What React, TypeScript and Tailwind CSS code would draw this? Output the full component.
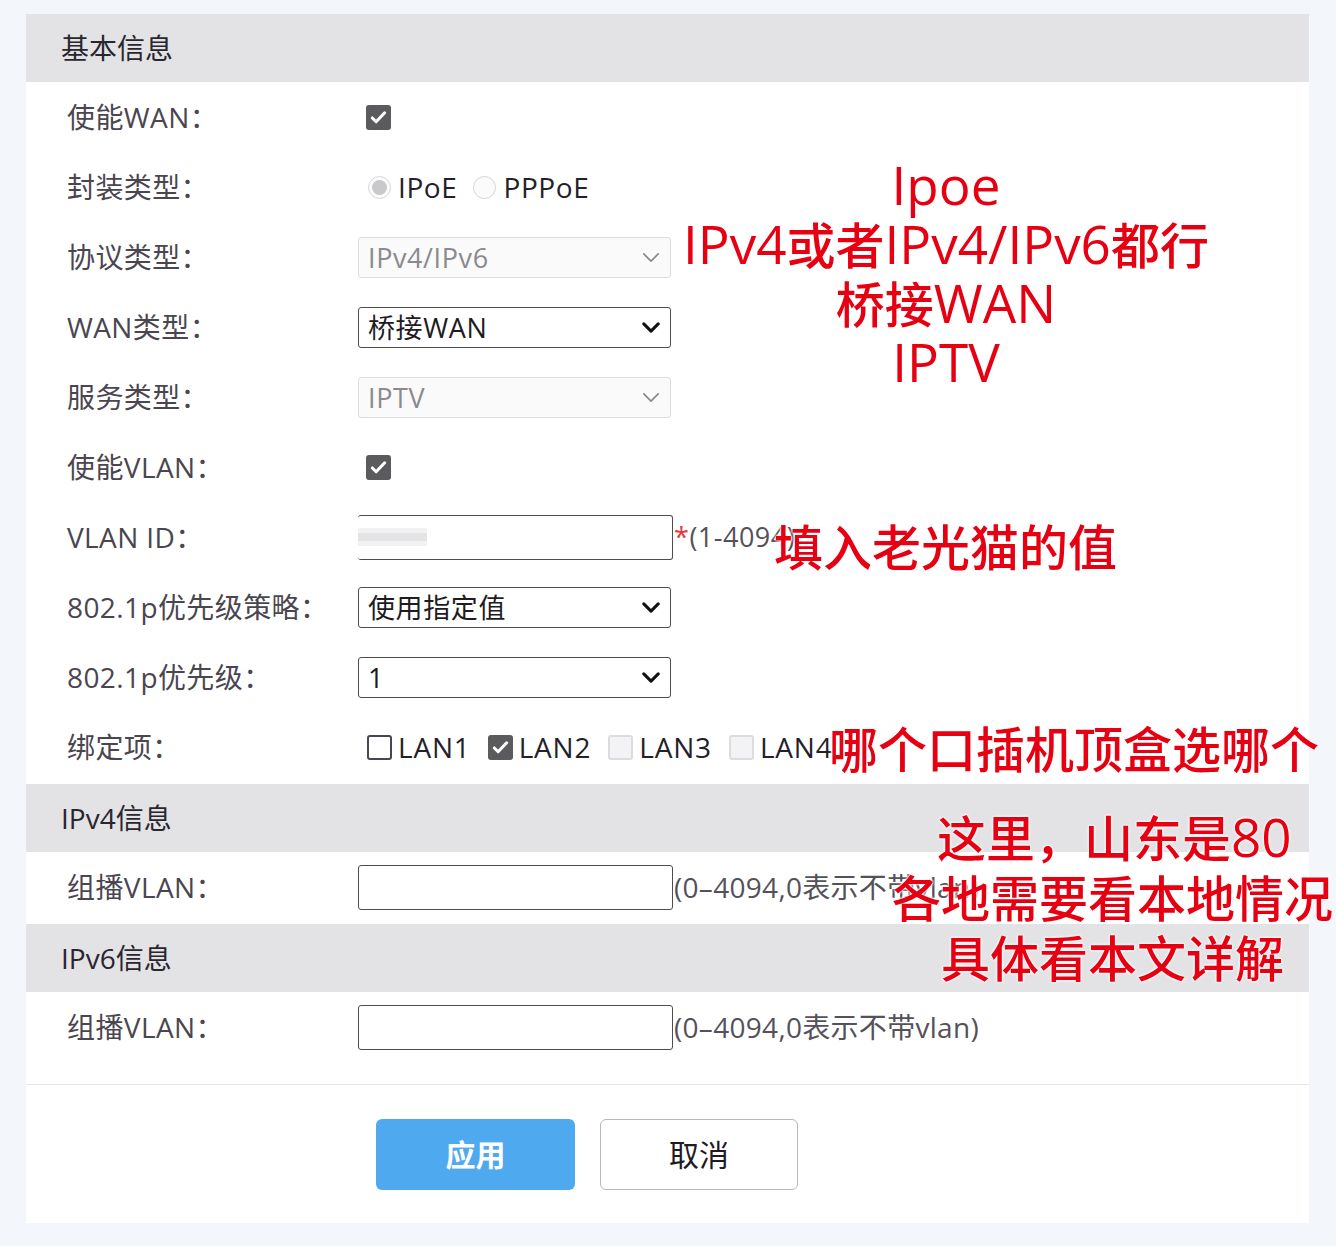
import React from 'react';

const font = { fontFamily: '"Open Sans", "Noto Sans CJK SC", sans-serif' };

const Check = ({ checked, disabled }: { checked?: boolean; disabled?: boolean }) => {
  if (checked) {
    return (
      <span className="w-[25px] h-[25px] rounded-[3px] bg-[#5b5b5d] flex items-center justify-center shrink-0">
        <svg viewBox="0 0 20 20" className="w-[19px] h-[19px]">
          <path d="M3.5 10.5l4 4 9-9.5" fill="none" stroke="#fff" strokeWidth="3.2" strokeLinecap="round" strokeLinejoin="round" />
        </svg>
      </span>
    );
  }
  return (
    <span
      className={
        'w-[25px] h-[25px] rounded-[3px] border-2 shrink-0 ' +
        (disabled ? 'border-[#dcdcdf] bg-[#f3f3f5]' : 'border-[#4a4550] bg-white')
      }
    />
  );
};

const Chevron = ({ bold }: { bold?: boolean }) => (
  <svg viewBox="0 0 20 12" className="w-[18px] h-[11px]">
    <path
      d="M2 2l8 8 8-8"
      fill="none"
      stroke={bold ? '#111' : '#888'}
      strokeWidth={bold ? 3.4 : 1.8}
      strokeLinecap="round"
      strokeLinejoin="round"
    />
  </svg>
);

const Select = ({ value, disabled }: { value: string; disabled?: boolean }) => (
  <div
    className={
      'w-[313px] h-[41px] rounded-[3px] border flex items-center justify-between pl-[9px] pr-[10px] ' +
      (disabled ? 'border-[#dedee0] bg-[#fafafb] text-[#8a8a8e]' : 'border-[#4e4b52] bg-white text-[#1e1b22]')
    }
  >
    <span className="text-[27px] leading-none tracking-[0.6px]">{value}</span>
    <Chevron bold={!disabled} />
  </div>
);

const Row = ({ label, children }: { label: string; children: React.ReactNode }) => (
  <div className="h-[70px] flex items-center pl-[41px]">
    <div className="w-[291px] text-[28px] text-[#4a4650] tracking-[0.4px]">{label}</div>
    <div className="flex items-center">{children}</div>
  </div>
);

const Header = ({ title }: { title: string }) => (
  <div className="h-[68px] bg-[#e3e3e5] flex items-center pl-[35px] text-[28px] text-[#2a2630]">{title}</div>
);

const Radio = ({ on, label }: { on?: boolean; label: string }) => (
  <div className="flex items-center gap-[7px]">
    <span className="w-[23px] h-[23px] rounded-full border border-[#d6d6d9] bg-[#fbfbfc] flex items-center justify-center">
      {on && <span className="w-[15px] h-[15px] rounded-full bg-[#c9c9cc]" />}
    </span>
    <span className="text-[28px] text-[#241f2a] tracking-[0.6px]">{label}</span>
  </div>
);

const red =
  'absolute text-[#e60012] font-medium leading-[50px] whitespace-nowrap [text-shadow:0_0_3px_#fff,0_0_3px_#fff,0_0_2px_#fff]';

const L = ({ children }: { children: React.ReactNode }) => (
  <span className="text-[53px] leading-[50px]">{children}</span>
);

export default function App() {
  return (
    <div className="relative w-[1336px] h-[1246px] bg-[#f3f6fb] pt-[14px] pl-[26px]" style={font}>
      <div className="w-[1283px] bg-white pb-[33px]">
        <Header title="基本信息" />
        <Row label="使能WAN：">
          <span className="ml-[8px]"><Check checked /></span>
        </Row>
        <Row label="封装类型：">
          <div className="flex items-center gap-[16px] ml-[10px]">
            <Radio on label="IPoE" />
            <Radio label="PPPoE" />
          </div>
        </Row>
        <Row label="协议类型：">
          <Select value="IPv4/IPv6" disabled />
        </Row>
        <Row label="WAN类型：">
          <Select value="桥接WAN" />
        </Row>
        <Row label="服务类型：">
          <Select value="IPTV" disabled />
        </Row>
        <Row label="使能VLAN：">
          <span className="ml-[8px]"><Check checked /></span>
        </Row>
        <Row label="VLAN ID：">
          <div className="w-[315px] h-[45px] border border-[#4e4b52] border-l-0 rounded-[3px] bg-white flex items-center">
            <span className="w-[69px] h-[18px] bg-[#e4e4e6] border-y-[5px] border-[#f2f2f3]" />
          </div>
          <span className="text-[27px] text-[#55515a] ml-[1px] tracking-[0.5px]">
            <span className="text-[#e03a3a]">*</span>(1-4094)
          </span>
        </Row>
        <Row label="802.1p优先级策略：">
          <Select value="使用指定值" />
        </Row>
        <Row label="802.1p优先级：">
          <Select value="1" />
        </Row>
        <Row label="绑定项：">
          <div className="flex items-center gap-[17px] ml-[9px] text-[28px] text-[#241f2a] tracking-[0.8px]">
            <div className="flex items-center gap-[6px]"><Check /><span>LAN1</span></div>
            <div className="flex items-center gap-[6px]"><Check checked /><span>LAN2</span></div>
            <div className="flex items-center gap-[6px]"><Check disabled /><span>LAN3</span></div>
            <div className="flex items-center gap-[6px]"><Check disabled /><span>LAN4</span></div>
          </div>
        </Row>
        <div className="h-[2px]" />
        <Header title="IPv4信息" />
        <Row label="组播VLAN：">
          <div className="w-[315px] h-[45px] border border-[#4e4b52] rounded-[3px] bg-white" />
          <span className="text-[28px] text-[#55515a] ml-[1px] tracking-[0.3px]">(0–4094,0表示不带vlan)</span>
        </Row>
        <div className="h-[2px]" />
        <Header title="IPv6信息" />
        <Row label="组播VLAN：">
          <div className="w-[315px] h-[45px] border border-[#4e4b52] rounded-[3px] bg-white" />
          <span className="text-[28px] text-[#55515a] ml-[1px] tracking-[0.3px]">(0–4094,0表示不带vlan)</span>
        </Row>
        <div className="h-[22px]" />
        <div className="border-t border-[#e6e6e8] pt-[34px] flex gap-[25px] pl-[350px]">
          <button className="w-[199px] h-[71px] rounded-[6px] bg-[#4fa9ef] text-white text-[30px] font-bold">应用</button>
          <button className="w-[198px] h-[71px] rounded-[6px] border border-[#b8b8bc] bg-white text-[#1e1b22] text-[30px]">取消</button>
        </div>
      </div>

      <div className="absolute left-[640px] top-[160px] w-[612px] flex flex-col items-center gap-[8px] text-[49px] text-[#e60012] font-medium leading-[50px] whitespace-nowrap [text-shadow:0_0_3px_#fff,0_0_3px_#fff,0_0_2px_#fff]">
        <div><L>Ipoe</L></div>
        <div><L>IPv4</L>或者<L>IPv4/IPv6</L>都行</div>
        <div>桥接<L>WAN</L></div>
        <div><L>IPTV</L></div>
      </div>
      <span className={red + ' left-[774px] top-[522px] text-[49px]'}>填入老光猫的值</span>
      <span className={red + ' left-[829px] top-[724px] text-[49px]'}>哪个口插机顶盒选哪个</span>
      <span className={red + ' left-[937px] top-[812px] text-[49px]'}>
        这里，山东是<L>80</L>
      </span>
      <span className={red + ' left-[892px] top-[873px] text-[49px]'}>各地需要看本地情况</span>
      <span className={red + ' left-[941px] top-[933px] text-[49px]'}>具体看本文详解</span>
    </div>
  );
}
